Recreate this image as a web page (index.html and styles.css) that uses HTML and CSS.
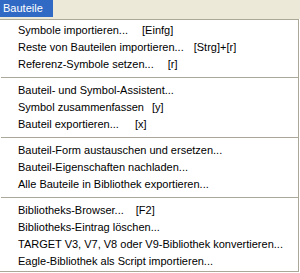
FILE: index.html
```html
<!DOCTYPE html>
<html lang="de">
<head>
  <meta charset="UTF-8" />
  <title>Bauteile</title>
  <link rel="stylesheet" href="styles.css">
</head>
<body>

<div class="menubar">
  <span class="menubar-item aktiv">Bauteile</span>
</div>

<div class="menu">
  <div class="eintrag">Symbole importieren...<span class="kurz k14">[Einfg]</span></div>
  <div class="eintrag">Reste von Bauteilen importieren...<span class="kurz k10">[Strg]+[r]</span></div>
  <div class="eintrag">Referenz-Symbole setzen...<span class="kurz k14">[r]</span></div>
  <div class="trenner"></div>
  <div class="eintrag">Bauteil- und Symbol-Assistent...</div>
  <div class="eintrag">Symbol zusammenfassen<span class="kurz k8">[y]</span></div>
  <div class="eintrag">Bauteil exportieren...<span class="kurz k16">[x]</span></div>
  <div class="trenner"></div>
  <div class="eintrag">Bauteil-Form austauschen und ersetzen...</div>
  <div class="eintrag">Bauteil-Eigenschaften nachladen...</div>
  <div class="eintrag">Alle Bauteile in Bibliothek exportieren...</div>
  <div class="trenner"></div>
  <div class="eintrag">Bibliotheks-Browser...<span class="kurz k12">[F2]</span></div>
  <div class="eintrag">Bibliotheks-Eintrag löschen...</div>
  <div class="eintrag">TARGET V3, V7, V8 oder V9-Bibliothek konvertieren...</div>
  <div class="eintrag">Eagle-Bibliothek als Script importieren...</div>
</div>

</body>
</html>
```

FILE: styles.css
```css
body {
  margin: 0; font-family: 'Liberation Sans', Arial, sans-serif; font-size: 11px;
  color: #000; background: #fff; width: 300px; height: 273px; overflow: hidden;
}
.menubar {
  height: 19px; background: #ece9d8; display: flex; align-items: flex-start;
}
.menubar-item {
  height: 17px; line-height: 17px; padding: 0 10px 0 3px;
}
.menubar-item.aktiv { background: #316ac5; color: #fff; }
.menu {
  width: 298px; border: 1px solid #aca899; border-left: none;
  background: #fff; padding: 2px 0 1px;
}
.eintrag {
  height: 17px; line-height: 17px; padding-left: 18px; white-space: nowrap;
}
.kurz { display: inline-block; }
.k8 { margin-left: 8px; }
.k10 { margin-left: 10px; }
.k12 { margin-left: 12px; }
.k14 { margin-left: 14px; }
.k16 { margin-left: 16px; }
.trenner {
  height: 1px; background: #aca899; margin: 4px 0 4px 1px;
}
```
